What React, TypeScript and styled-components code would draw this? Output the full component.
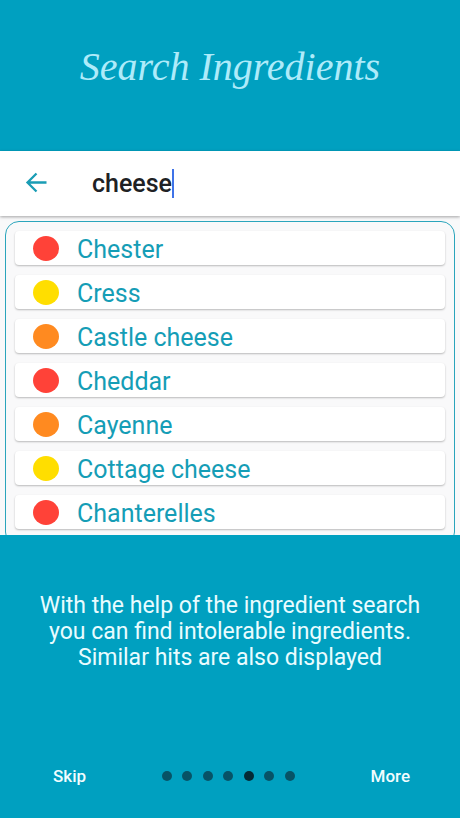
import React from 'react';
import styled, { createGlobalStyle } from 'styled-components';

const Global = createGlobalStyle`
  * { box-sizing: border-box; }
  body { margin: 0; background: #00a0c0; font-family: Roboto, sans-serif; }
`;
const Page = styled.main`
  min-height: 100vh;
  display: flex;
  flex-direction: column;
  background: #00a0c0;
`;
const Heading = styled.h1`
  margin: 0;
  padding: 43px 16px 60px;
  text-align: center;
  font: italic 400 40px/48px "Liberation Serif", serif;
  color: #aeebfa;
`;
const Preview = styled.section`
  background: #f9f9fa;
`;
const SearchBar = styled.form`
  display: flex;
  align-items: center;
  padding: 16px 24px 17px;
  background: #fff;
  box-shadow: 0 1px 3px rgba(0, 0, 0, 0.35);
`;
const BackButton = styled.button`
  display: flex;
  margin-right: 44px;
  padding: 0;
  border: 0;
  background: none;
  color: #1a9db5;
`;
const Field = styled.input`
  field-sizing: content;
  padding: 2px 0 0;
  border: 0;
  outline: 0;
  background: none;
  caret-color: transparent;
  font: 500 25px/30px Roboto, sans-serif;
  color: #202124;
`;
const Caret = styled.span`
  width: 2px;
  height: 29px;
  background: #3f73e8;
`;
const ResultsWindow = styled.div`
  height: 319px;
  padding: 5px 5px 0;
  overflow: hidden;
`;
const Results = styled.ul`
  display: grid;
  gap: 10px;
  margin: 0;
  padding: 9px 9px 16px;
  border: 1px solid #2ba5bc;
  border-radius: 14px;
  list-style: none;
`;
const Card = styled.li`
  display: flex;
  align-items: center;
  gap: 18px;
  height: 34px;
  padding-left: 18px;
  border-radius: 4px;
  background: #fff;
  box-shadow: 0 1px 2px rgba(0, 0, 0, 0.26);
`;
const Name = styled.span`
  padding-top: 3px;
  font-size: 25px;
  line-height: 31px;
  color: #159db6;
`;
const Marker = styled.span<{ $color: string }>`
  width: 26px;
  height: 25px;
  border-radius: 50%;
  background: ${({ $color }) => $color};
`;
const Description = styled.p`
  margin: 0;
  padding: 58px 32px;
  text-align: center;
  font-size: 23px;
  line-height: 26px;
  color: #e9fcff;
`;
const Footer = styled.nav`
  display: flex;
  align-items: center;
  justify-content: space-between;
  margin-top: auto;
  padding: 0 50px 30px 53px;
`;
const TextButton = styled.button`
  padding: 0;
  border: 0;
  background: none;
  font: 500 17px/24px Roboto, sans-serif;
  color: #f2fdff;
`;
const Dots = styled.div`
  display: flex;
  justify-content: space-between;
  width: 133px;
`;
const Dot = styled.span<{ $active: boolean }>`
  width: 10px;
  height: 10px;
  border-radius: 50%;
  background: ${({ $active }) => ($active ? '#042a35' : '#075366')};
`;

const RED = '#ff4238';
const YELLOW = '#ffde00';
const ORANGE = '#ff8a20';

const ingredients = [
  { name: 'Chester', color: RED },
  { name: 'Cress', color: YELLOW },
  { name: 'Castle cheese', color: ORANGE },
  { name: 'Cheddar', color: RED },
  { name: 'Cayenne', color: ORANGE },
  { name: 'Cottage cheese', color: YELLOW },
  { name: 'Chanterelles', color: RED },
];
const PAGE_COUNT = 7;
const CURRENT_PAGE = 4;

export default function App() {
  return (
    <Page>
      <Global />
      <Heading>Search Ingredients</Heading>
      <Preview>
        <SearchBar role="search" onSubmit={(e) => e.preventDefault()}>
          <BackButton type="button" aria-label="Back">
            <svg width="24" height="30" viewBox="0 0 24 30" fill="none" stroke="currentColor" strokeWidth="2.3">
              <path d="M22.5 14.5H3.5M12.5 5.5L3.5 14.5L12.5 23.5" />
            </svg>
          </BackButton>
          <Field aria-label="Search ingredients" defaultValue="cheese" />
          <Caret />
        </SearchBar>
        <ResultsWindow>
          <Results>
            {ingredients.map(({ name, color }) => (
              <Card key={name}>
                <Marker $color={color} />
                <Name>{name}</Name>
              </Card>
            ))}
          </Results>
        </ResultsWindow>
      </Preview>
      <Description>
        With the help of the ingredient search you can find intolerable ingredients. Similar hits are also displayed
      </Description>
      <Footer aria-label="Introduction">
        <TextButton type="button">Skip</TextButton>
        <Dots>
          {Array.from({ length: PAGE_COUNT }, (_, i) => (
            <Dot key={i} $active={i === CURRENT_PAGE} />
          ))}
        </Dots>
        <TextButton type="button">More</TextButton>
      </Footer>
    </Page>
  );
}
